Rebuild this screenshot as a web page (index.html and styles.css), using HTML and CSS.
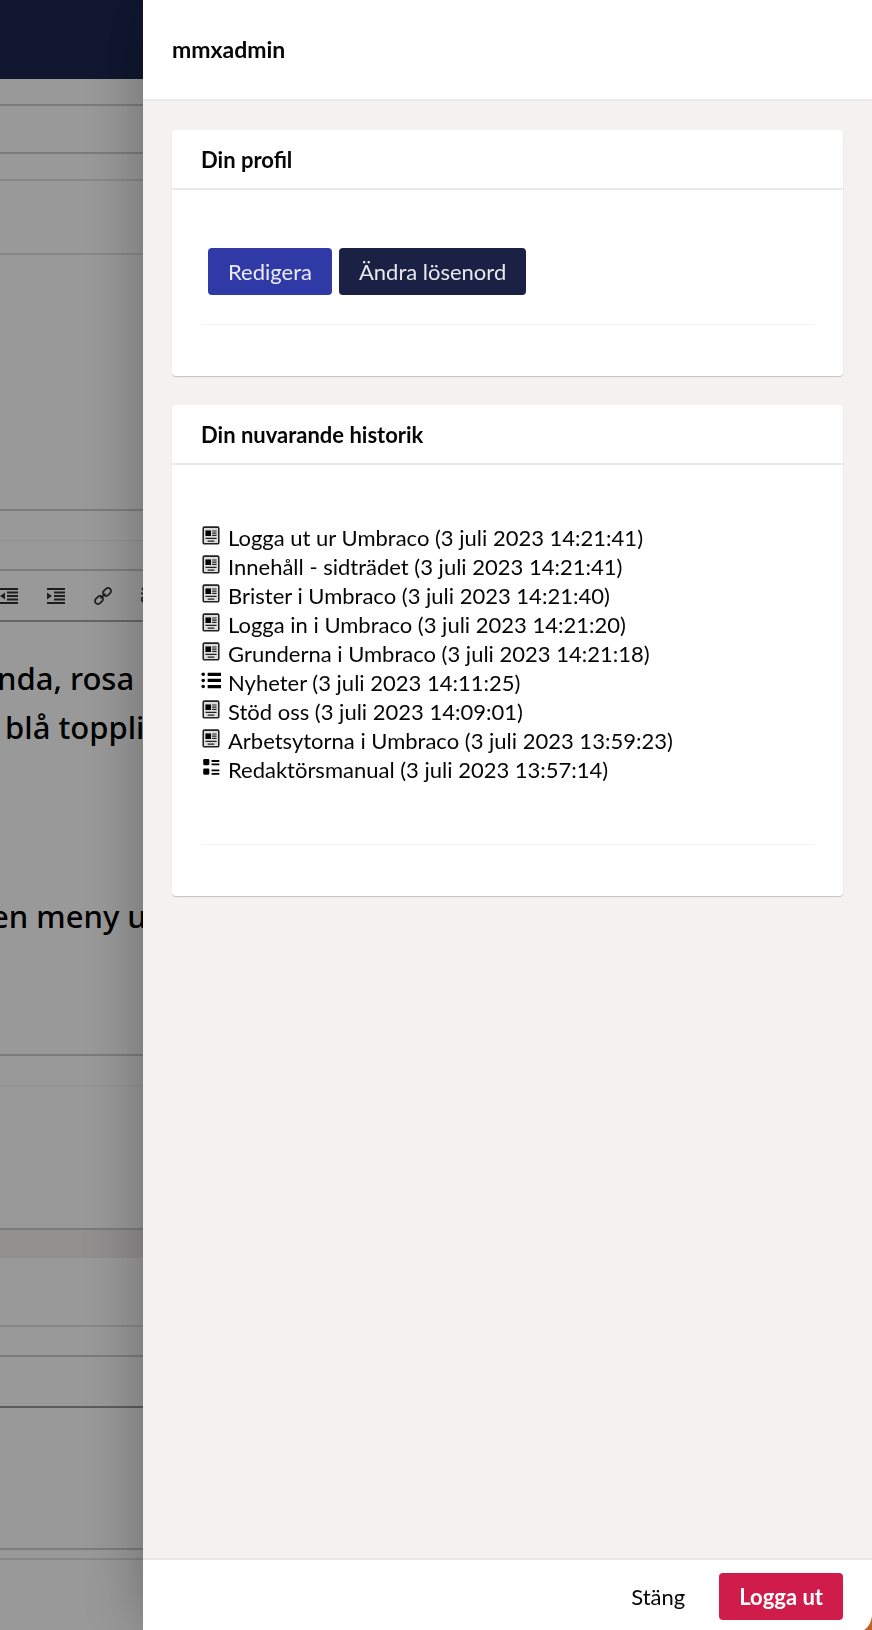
FILE: index.html
```
<!DOCTYPE html>
<html lang="sv">
<head>
    <meta charset="UTF-8">
    <meta name="viewport" content="width=device-width, initial-scale=1.0">
    <title>mmxadmin</title>
    <link rel="stylesheet" href="styles.css">
</head>
<body>
    <svg class="symbols" aria-hidden="true">
        <symbol id="icon-article" viewBox="0 0 18 18">
            <rect x="2" y="1" width="14" height="15" rx="1" fill="#ddd" stroke="#222" stroke-width="1.4"/>
            <rect x="4" y="4" width="5" height="5"/>
            <path d="M10 4.5h4M10 6.5h4M10 8.5h4M4 11.2h10M6 13.6h6" stroke="#222" stroke-width="1.1"/>
        </symbol>
        <symbol id="icon-list" viewBox="0 0 18 18">
            <circle cx="2" cy="3" r="1.6"/>
            <circle cx="2" cy="8.5" r="1.6"/>
            <circle cx="2" cy="14" r="1.6"/>
            <path d="M6 3h12M6 8.5h12M6 14h12" stroke="#000" stroke-width="3"/>
        </symbol>
        <symbol id="icon-thumbnails" viewBox="0 0 18 18">
            <rect x="2" y="1" width="5.5" height="5.5" rx="1"/>
            <rect x="2" y="9.5" width="5.5" height="5.5" rx="1"/>
            <path d="M9.5 2.7h7M9.5 5.7h7M9.5 11.2h7M9.5 14.2h7" stroke="#000" stroke-width="1.6"/>
        </symbol>
    </svg>

    <div class="page">
        <div class="topbar"></div>
        <div class="row row-gap"></div>
        <div class="row row-tabs"></div>
        <div class="row row-gap light"></div>
        <div class="row row-title light"></div>
        <div class="row row-intro"></div>
        <div class="row row-space faint"></div>
        <div class="row row-space"></div>
        <div class="toolbar row">
            <svg width="18" height="16" viewBox="0 0 18 16"><path d="M0 1h18M7 4.5h11M7 8h11M7 11.5h11M0 15h18" stroke="#333" stroke-width="1.8"/><path d="M5 4.5v7L0 8z" fill="#333"/></svg>
            <svg width="18" height="16" viewBox="0 0 18 16"><path d="M0 1h18M7 4.5h11M7 8h11M7 11.5h11M0 15h18" stroke="#333" stroke-width="1.8"/><path d="M0 4.5v7L5 8z" fill="#333"/></svg>
            <svg width="18" height="18" viewBox="0 0 18 18" fill="none" stroke="#333" stroke-width="1.7"><rect x="-4.5" y="-3" width="9" height="6" rx="3" transform="translate(5 13) rotate(-45)"/><rect x="-4.5" y="-3" width="9" height="6" rx="3" transform="translate(13 5) rotate(-45)"/><path d="M6.5 11.5l5-5"/></svg>
            <svg width="18" height="18" viewBox="0 0 18 18" fill="none" stroke="#333" stroke-width="1.7"><path d="M1 1l2 3M0 6l3 1M2 10c-3 3 0 6 3 4"/></svg>
        </div>
        <div class="row editor">
            <p>nda, rosa</p>
            <p>&nbsp;blå topplisten</p>
            <p class="next">en meny ut</p>
        </div>
        <div class="row row-space faint"></div>
        <div class="row row-field"></div>
        <div class="band"></div>
        <div class="row row-label light"></div>
        <div class="row row-space"></div>
        <div class="row row-bar"></div>
        <div class="row row-body"></div>
        <div class="row row-end light"></div>
    </div>
    <div class="backdrop"></div>

    <div class="panel">
        <header class="panel-header">
            <h1>mmxadmin</h1>
        </header>
        <main class="panel-body">
            <section class="box">
                <h2>Din profil</h2>
                <div class="box-content">
                    <div class="actions">
                        <button type="button" class="btn btn-edit">Redigera</button>
                        <button type="button" class="btn btn-password">Ändra lösenord</button>
                    </div>
                </div>
            </section>
            <section class="box">
                <h2>Din nuvarande historik</h2>
                <div class="box-content">
                    <ul class="history">
                        <li><svg><use href="#icon-article"/></svg><a href="#">Logga ut ur Umbraco (3 juli 2023 14:21:41)</a></li>
                        <li><svg><use href="#icon-article"/></svg><a href="#">Innehåll - sidträdet (3 juli 2023 14:21:41)</a></li>
                        <li><svg><use href="#icon-article"/></svg><a href="#">Brister i Umbraco (3 juli 2023 14:21:40)</a></li>
                        <li><svg><use href="#icon-article"/></svg><a href="#">Logga in i Umbraco (3 juli 2023 14:21:20)</a></li>
                        <li><svg><use href="#icon-article"/></svg><a href="#">Grunderna i Umbraco (3 juli 2023 14:21:18)</a></li>
                        <li><svg><use href="#icon-list"/></svg><a href="#">Nyheter (3 juli 2023 14:11:25)</a></li>
                        <li><svg><use href="#icon-article"/></svg><a href="#">Stöd oss (3 juli 2023 14:09:01)</a></li>
                        <li><svg><use href="#icon-article"/></svg><a href="#">Arbetsytorna i Umbraco (3 juli 2023 13:59:23)</a></li>
                        <li><svg><use href="#icon-thumbnails"/></svg><a href="#">Redaktörsmanual (3 juli 2023 13:57:14)</a></li>
                    </ul>
                </div>
            </section>
        </main>
        <footer class="panel-footer">
            <button type="button" class="btn btn-close">Stäng</button>
            <button type="button" class="btn btn-logout">Logga ut</button>
        </footer>
        <svg class="corner" width="8" height="14" viewBox="0 0 8 14" aria-hidden="true"><path d="M8 0C7 6 5 11 0 14h8z" fill="#c2601f"/></svg>
    </div>
</body>
</html>
```
FILE: styles.css
```
* {
    box-sizing: border-box;
}
body {
    margin: 0;
    min-height: 100vh;
    overflow: hidden;
    font-family: Lato, sans-serif;
    font-size: 22px;
    line-height: 29px;
    color: #060606;
    background-color: #fff;
}
h1, h2, p, ul {
    margin: 0;
    padding: 0;
}
.symbols {
    position: absolute;
    width: 0;
    height: 0;
}

/* editor behind the panel */
.topbar {
    height: 79px;
    background-color: #1b264f;
}
.row {
    border-bottom: 2px solid #cfcfcf;
}
.row.light {
    border-bottom-color: #e2e2e2;
}
.row.faint {
    border-bottom: 1px solid #eee;
}
.row-gap {
    height: 27px;
}
.row-tabs {
    height: 48px;
}
.row-title {
    height: 74px;
}
.row-intro {
    height: 256px;
}
.row-space {
    height: 30px;
}
.toolbar {
    display: flex;
    align-items: center;
    gap: 29px;
    height: 51px;
    border-bottom-color: #aaa;
}
.editor {
    height: 434px;
    padding-top: 32px;
    overflow: hidden;
    font-family: "Noto Sans", sans-serif;
    font-size: 31px;
    font-weight: 500;
    line-height: 49px;
    color: #000;
    white-space: nowrap;
}
.editor p {
    margin-left: -3px;
}
.editor .next {
    margin-top: 140px;
    text-indent: -6px;
}
.row-field {
    height: 144px;
}
.band {
    height: 28px;
    background-color: #f3eeef;
}
.row-label {
    height: 69px;
}
.row-bar {
    height: 51px;
    border-bottom-color: #999;
}
.row-body {
    height: 142px;
}
.row-end {
    height: 10px;
}
.backdrop {
    position: fixed;
    inset: 0;
    background-color: rgba(0, 0, 0, 0.4);
}

/* side panel */
.panel {
    position: fixed;
    top: 0;
    right: 0;
    bottom: 0;
    left: 143px;
    display: flex;
    flex-direction: column;
    background-color: #f3f2f1;
    box-shadow: 0 0 60px rgba(0, 0, 0, 0.3);
}
.panel-header {
    display: flex;
    align-items: center;
    height: 101px;
    padding: 0 29px;
    background-color: #fff;
    border-bottom: 2px solid #e9e9eb;
}
.panel-header h1 {
    font-size: 23px;
    font-weight: 700;
}
.panel-body {
    flex: 1;
    padding: 29px;
}
.box {
    margin-bottom: 29px;
    background-color: #fff;
    border-radius: 4px;
    box-shadow: 0 1px 1px rgba(0, 0, 0, 0.2);
}
.box h2 {
    padding: 15px 29px 14px;
    font-size: 22px;
    font-weight: 700;
    border-bottom: 2px solid #e9e9eb;
}
.box-content {
    padding: 58px 29px 51px;
}
.actions {
    display: flex;
    gap: 7px;
    padding: 0 7px 29px;
    border-bottom: 1px solid #f3f3f5;
}
.btn {
    height: 47px;
    padding: 0 20px;
    border: 0;
    border-radius: 4px;
    font-family: inherit;
    font-size: 22px;
    line-height: 29px;
    cursor: pointer;
}
.btn-edit {
    background-color: #2f3aa6;
    color: #eaebf6;
}
.btn-password {
    background-color: #1a2145;
    color: #e8e9ec;
}
.history {
    padding-bottom: 60px;
    list-style: none;
    border-bottom: 1px solid #f3f3f5;
}
.history li {
    display: flex;
    gap: 7px;
}
.history svg {
    width: 20px;
    height: 20px;
    margin-top: 3px;
}
.history a {
    color: inherit;
    text-decoration: none;
}
.panel-footer {
    display: flex;
    justify-content: flex-end;
    align-items: center;
    gap: 14px;
    height: 72px;
    padding: 2px 29px 0;
    background-color: #fff;
    border-top: 2px solid #e9e9eb;
}
.btn-close {
    background-color: transparent;
    color: #060606;
}
.btn-logout {
    background-color: #d01c4a;
    color: #fff;
    font-weight: 700;
}
.corner {
    position: absolute;
    right: 0;
    bottom: 0;
}
```
